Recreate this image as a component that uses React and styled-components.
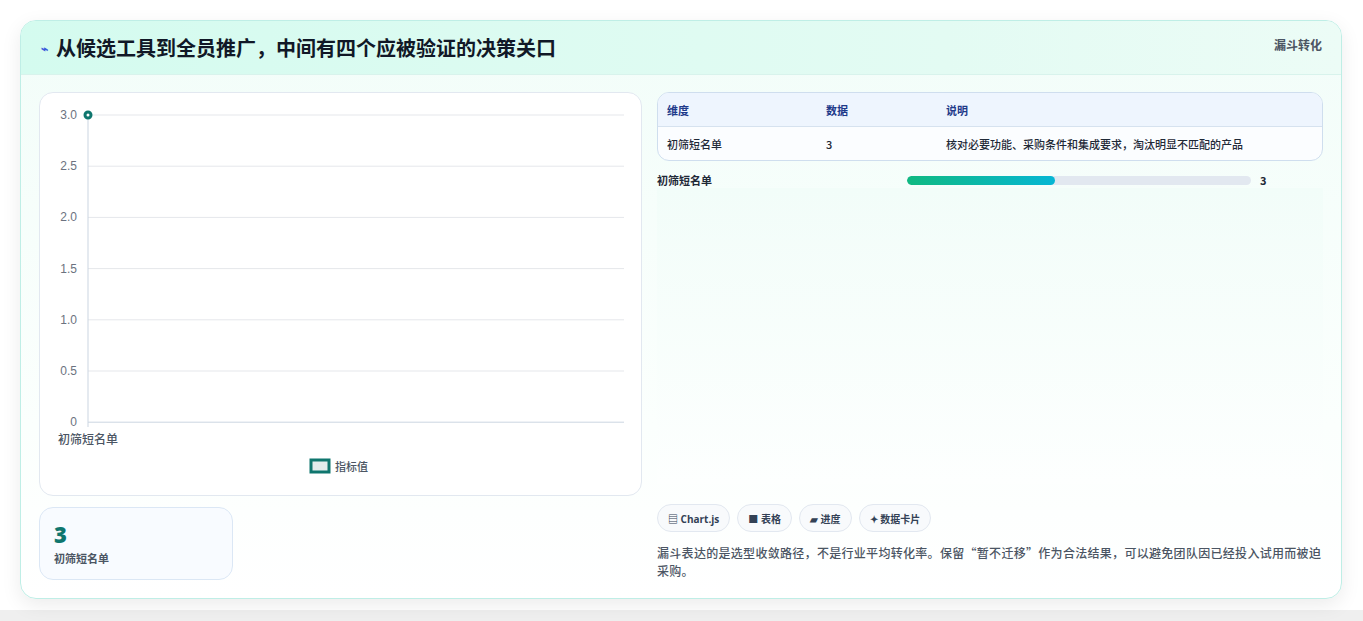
import React from "react";
import styled, { createGlobalStyle } from "styled-components";

const G = createGlobalStyle`
  html,body{margin:0;background:#fff;font-family:"Noto Sans CJK SC","Noto Sans",sans-serif;}
  #root{height:621px;background:linear-gradient(#fff 0,#fff 610px,#efefef 610px);padding:20px 21px 0 20px;box-sizing:border-box;}
`;
const Card = styled.div`
  width:1322px;height:579px;box-sizing:border-box;border:1px solid #bfeee6;border-radius:16px;overflow:hidden;
  box-shadow:0 6px 20px rgba(0,0,0,0.08);
  background:linear-gradient(180deg,#f2fdf9 0%,#fbfffd 70%,#fff 100%);
  display:flex;flex-direction:column;
`;
const Header = styled.div`
  height:55px;box-sizing:border-box;display:flex;align-items:flex-start;justify-content:space-between;
  padding:0 19px 0 20px;background:linear-gradient(90deg,#d4fbef,#e3fbf3 70%,#ecfcf6);border-bottom:1px solid #d8f3ec;
`;
const Title = styled.h1`
  margin:12px 0 0;font-size:20px;font-weight:700;color:#111827;display:flex;align-items:center;gap:8px;
`;
const Bolt = styled.span`color:#3b5bdb;font-size:12px;`;
const Tag = styled.div`margin-top:15px;font-size:12px;font-weight:700;color:#4b5563;`;
const Body = styled.div`
  flex:1;display:grid;grid-template-columns:603px 666px;gap:15px;padding:17px 19px 18px 18px;
`;
const Col = styled.div`display:flex;flex-direction:column;gap:11px;`;
const ChartBox = styled.div`
  height:404px;box-sizing:border-box;border:1px solid #e2e8f0;border-radius:14px;background:#fff;position:relative;
`;
const Kpi = styled.div`
  width:194px;height:73px;box-sizing:border-box;border:1px solid #dbe7f5;border-radius:14px;background:#f8fbff;padding:10px 14px;
`;
const KpiVal = styled.div`font-size:22px;font-weight:800;color:#0f766e;line-height:32px;font-family:"Open Sans",sans-serif;`;
const KpiLbl = styled.div`font-size:11px;color:#4b5563;font-weight:700;`;
const Right = styled.div`display:flex;flex-direction:column;`;
const Table = styled.div`border:1px solid #cfdeee;border-radius:12px;overflow:hidden;background:#fbfdff;`;
const Row = styled.div`
  display:grid;grid-template-columns:159px 120px 1fr;height:33px;align-items:center;padding-left:9px;font-size:11px;
  background:${p=>p.$head?"#eef5fe":"transparent"};color:${p=>p.$head?"#1e3a8a":"#1f2937"};font-weight:${p=>p.$head?700:500};
  border-bottom:${p=>p.$head?"1px solid #d6e2ef":"none"};
`;
const Prog = styled.div`display:grid;grid-template-columns:241px 344px auto;gap:0 9px;align-items:center;margin-top:11px;font-size:11px;font-weight:700;color:#1f2937;`;
const Track = styled.div`height:9px;border-radius:5px;background:#e2e8f0;overflow:hidden;`;
const Fill = styled.div`height:100%;border-radius:5px;background:linear-gradient(90deg,#10b981,#06b6d4);`;
const Spacer = styled.div`flex:1;background:linear-gradient(#f2fdf9,#fdfffe);margin:0 0 20px;`;
const Chips = styled.div`display:flex;gap:7px;`;
const Chip = styled.div`height:28px;box-sizing:border-box;padding:0 10px;border:1px solid #e2e8f0;border-radius:14px;background:#f8fafc;font-size:10px;font-weight:700;color:#334155;display:flex;align-items:center;gap:3px;font-family:"Open Sans","Noto Sans CJK SC",sans-serif;`;
const Note = styled.p`margin:12px 0 0;font-size:12px;line-height:18px;letter-spacing:0.3px;color:#4b5563;font-weight:500;`;

function Chart(){
  const ticks=["3.0","2.5","2.0","1.5","1.0","0.5","0"];
  return (
    <svg width="603" height="404" style={{display:"block"}}>
      {ticks.map((t,i)=>{const y=22+i*51.2;return (<g key={t}>
        <line x1="48" x2="584" y1={y} y2={y} stroke={i===6?"#cbd5e1":"#e5e7eb"} />
        <text x="37" y={y+4} textAnchor="end" fontSize="12" fill="#6b7280" fontFamily="Liberation Sans">{t}</text>
      </g>);})}
      <line x1="48" x2="48" y1="22" y2="334" stroke="#cbd5e1"/>
      <circle cx="48" cy="22" r="3" fill="#fff" stroke="#0f766e" strokeWidth="3"/>
      <text x="48" y="351" textAnchor="middle" fontSize="12" fontWeight="500" fill="#4b5563" fontFamily="Noto Sans CJK SC">初筛短名单</text>
      <rect x="271" y="367" width="18" height="12" fill="#e2ecec" stroke="#0f766e" strokeWidth="3"/>
      <text x="295" y="378" fontSize="11" fontWeight="500" fill="#4b5563" fontFamily="Noto Sans CJK SC">指标值</text>
    </svg>
  );
}

export default function App(){
  return (<><G/>
    <Card>
      <Header><Title><Bolt>⌁</Bolt>从候选工具到全员推广，中间有四个应被验证的决策关口</Title><Tag>漏斗转化</Tag></Header>
      <Body>
        <Col>
          <ChartBox><Chart/></ChartBox>
          <Kpi><KpiVal>3</KpiVal><KpiLbl>初筛短名单</KpiLbl></Kpi>
        </Col>
        <Right>
          <Table>
            <Row $head><span>维度</span><span>数据</span><span>说明</span></Row>
            <Row><span>初筛短名单</span><span>3</span><span>核对必要功能、采购条件和集成要求，淘汰明显不匹配的产品</span></Row>
          </Table>
          <Prog><span>初筛短名单</span><Track><Fill style={{width:"43%"}}/></Track><span>3</span></Prog>
          <Spacer/>
          <Chips><Chip>▤ Chart.js</Chip><Chip>■ 表格</Chip><Chip>▰ 进度</Chip><Chip>✦ 数据卡片</Chip></Chips>
          <Note>漏斗表达的是选型收敛路径，不是行业平均转化率。保留“暂不迁移”作为合法结果，可以避免团队因已经投入试用而被迫采购。</Note>
        </Right>
      </Body>
    </Card></>);
}
